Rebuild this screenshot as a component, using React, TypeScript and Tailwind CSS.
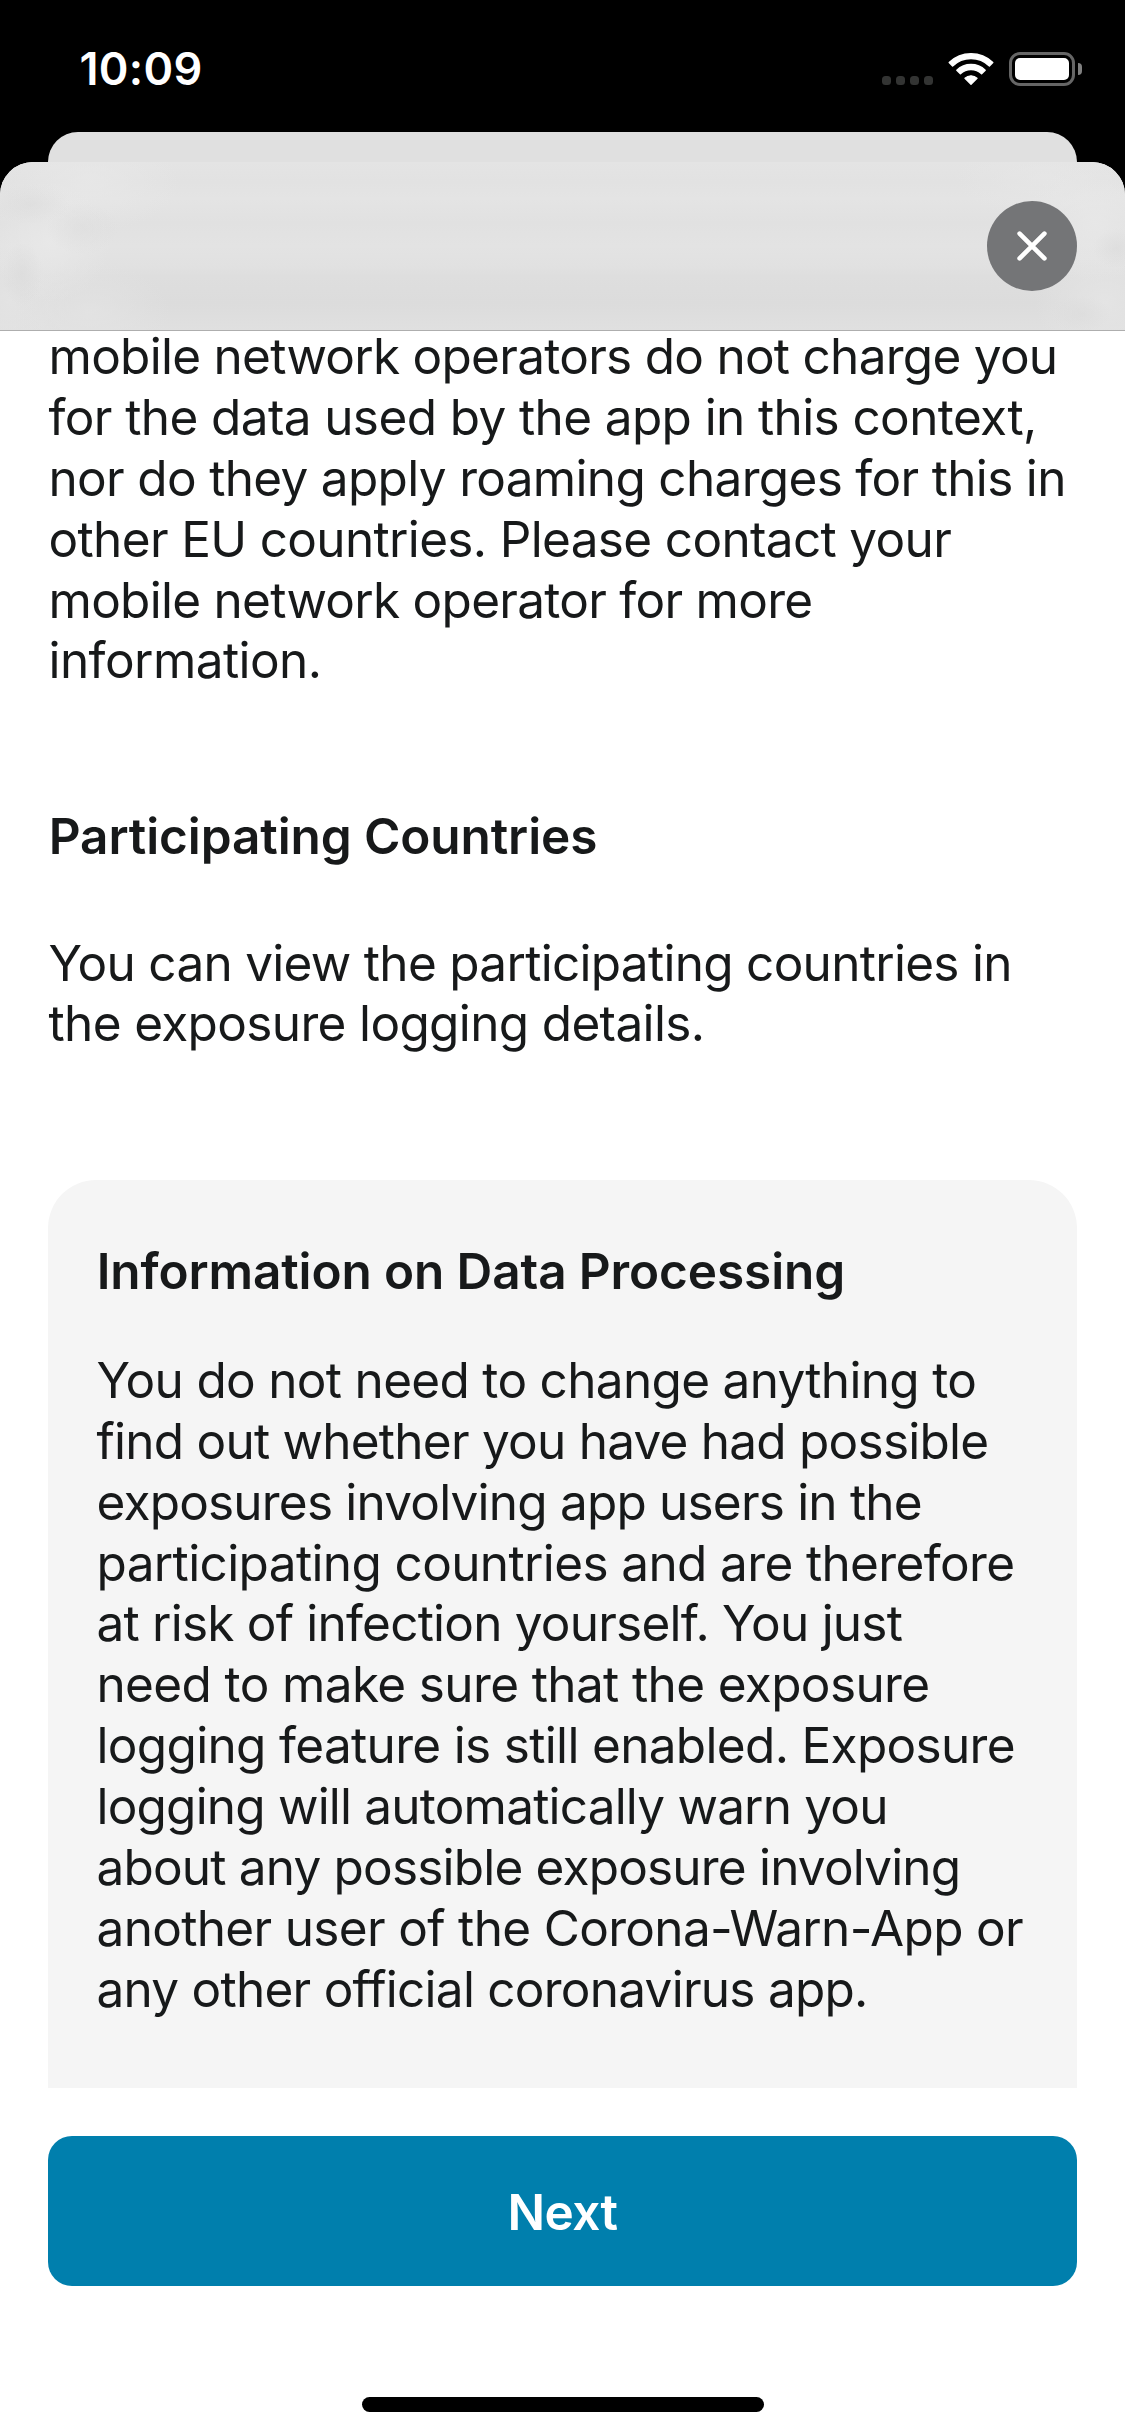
type Line = { text: string; spacing: string };

const chargesText: Line[] = [
  { text: "mobile network operators do not charge you", spacing: "tracking-[-0.725px]" },
  { text: "for the data used by the app in this context,", spacing: "tracking-[-0.608px]" },
  { text: "nor do they apply roaming charges for this in", spacing: "tracking-[-0.68px]" },
  { text: "other EU countries. Please contact your", spacing: "tracking-[-0.655px]" },
  { text: "mobile network operator for more", spacing: "tracking-[-0.72px]" },
  { text: "information.", spacing: "tracking-[-0.56px]" },
];

const countriesText: Line[] = [
  { text: "You can view the participating countries in", spacing: "tracking-[-0.71px]" },
  { text: "the exposure logging details.", spacing: "tracking-[-0.65px]" },
];

const processingText: Line[] = [
  { text: "You do not need to change anything to", spacing: "tracking-[-0.685px]" },
  { text: "find out whether you have had possible", spacing: "tracking-[-0.76px]" },
  { text: "exposures involving app users in the", spacing: "tracking-[-0.803px]" },
  { text: "participating countries and are therefore", spacing: "tracking-[-0.624px]" },
  { text: "at risk of infection yourself. You just", spacing: "tracking-[-0.782px]" },
  { text: "need to make sure that the exposure", spacing: "tracking-[-0.628px]" },
  { text: "logging feature is still enabled. Exposure", spacing: "tracking-[-0.67px]" },
  { text: "logging will automatically warn you", spacing: "tracking-[-0.803px]" },
  { text: "about any possible exposure involving", spacing: "tracking-[-0.815px]" },
  { text: "another user of the Corona-Warn-App or", spacing: "tracking-[-0.67px]" },
  { text: "any other official coronavirus app.", spacing: "tracking-[-0.745px]" },
];

function Paragraph({ lines, className = "" }: { lines: Line[]; className?: string }) {
  return (
    <p className={className}>
      {lines.map((line) => (
        <span key={line.text} className={`block whitespace-nowrap ${line.spacing}`}>
          {line.text}{" "}
        </span>
      ))}
    </p>
  );
}

function WifiIcon() {
  return (
    <svg className="h-[34px] w-[46px]" viewBox="0 0 46 34" fill="#fff" stroke="#fff" strokeWidth="1.4" strokeLinejoin="round">
      <path d="M1.2 10.4A31.6 31.6 0 0 1 44.8 10.4L41.4 13.9A26.4 26.4 0 0 0 4.6 13.9Z" />
      <path d="M8.8 18.2A20.4 20.4 0 0 1 37.2 18.2L33.6 21.8A15.1 15.1 0 0 0 12.4 21.8Z" />
      <path d="M17 26.2A8.9 8.9 0 0 1 29 26.2L23 32.2Z" />
    </svg>
  );
}

function BatteryIcon() {
  return (
    <div className="flex items-center gap-[3px]">
      <div className="h-[34px] w-[66px] rounded-[11px] border-[3px] border-[#666] p-[3px]">
        <div className="h-full w-full rounded-[5px] bg-white" />
      </div>
      <div className="h-3 w-1 rounded-r-full bg-[#808080]" />
    </div>
  );
}

function StatusBar() {
  return (
    <div className="flex h-[132px] shrink-0 items-start justify-between pt-[52px] pr-[43px] pl-[79.5px] text-white">
      <div className="text-[45px] leading-[34px] font-[560] tracking-[0.3px]">10:09</div>
      <div className="flex">
        <div className="mt-6 mr-[15px] flex gap-[5px]">
          {[0, 1, 2, 3].map((dot) => (
            <div key={dot} className="h-[9px] w-[9px] rounded-[3.5px] bg-[#333433]" />
          ))}
        </div>
        <WifiIcon />
        <div className="ml-[15px]">
          <BatteryIcon />
        </div>
      </div>
    </div>
  );
}

export default function App() {
  return (
    <div className="flex h-[2436px] w-[1125px] flex-col overflow-hidden bg-black font-['Inter','Liberation_Sans',sans-serif] text-[49.5px] leading-[60.86px] text-[#17191a]">
      <StatusBar />
      <div className="mx-12 h-[30px] shrink-0 rounded-t-[30px] bg-[#e0e0e0]" />
      <div className="flex min-h-0 flex-1 flex-col overflow-hidden rounded-t-[33px] bg-white">
        <header className="relative z-10 flex h-[169px] shrink-0 items-start justify-end border-b border-[#aeaeae] bg-[linear-gradient(180deg,#e4e4e4_0%,#e2e2e2_12%,#e4e4e4_22%,#e1e1e1_36%,#e3e3e3_50%,#e1e1e1_62%,#dedede_68%,#dcdcdc_84%,#e0e0e0_100%)] pt-[39px] pr-12">
          <div className="absolute inset-y-0 left-0 w-[180px] bg-[radial-gradient(ellipse_40px_20px_at_30px_42px,#d9d9d988,transparent),radial-gradient(ellipse_20px_32px_at_22px_112px,#d8d8d888,transparent),radial-gradient(ellipse_36px_26px_at_82px_66px,#dcdcdc88,transparent),radial-gradient(ellipse_60px_60px_at_50px_80px,#e9e9e9cc,transparent),radial-gradient(ellipse_90px_50px_at_90px_20px,#e9e9e9aa,transparent),radial-gradient(ellipse_80px_50px_at_90px_150px,#e4e4e4bb,transparent),radial-gradient(ellipse_60px_60px_at_10px_140px,#e5e5e5cc,transparent)]" />
          <div className="absolute inset-y-0 right-0 w-[180px] bg-[radial-gradient(ellipse_24px_20px_at_172px_86px,#d8d8d888,transparent),radial-gradient(ellipse_30px_18px_at_136px_152px,#d9d9d977,transparent),radial-gradient(ellipse_70px_60px_at_150px_60px,#e9e9e9bb,transparent),radial-gradient(ellipse_90px_40px_at_100px_16px,#e7e7e7aa,transparent),radial-gradient(ellipse_70px_60px_at_160px_140px,#e6e6e6cc,transparent)]" />
          <button aria-label="Close" className="relative flex h-[90px] w-[90px] items-center justify-center rounded-full bg-[#747577]">
            <svg className="h-[32px] w-[32px]" viewBox="0 0 32 32" fill="none" stroke="#fff" strokeWidth="4.6" strokeLinecap="round">
              <path d="M3.6 3.6 28.4 28.4M28.4 3.6 3.6 28.4" />
            </svg>
          </button>
        </header>
        <main className="h-[1757px] shrink-0 overflow-hidden px-12">
          <Paragraph lines={chargesText} className="-mt-[4.9px] pl-[0.5px]" />
          <h2 className="mt-[114.5px] pl-[0.7px] font-semibold tracking-[-0.1px]">Participating Countries</h2>
          <Paragraph lines={countriesText} className="mt-[66px] pl-[0.5px]" />
          <section className="mt-[125.6px] h-[960px] rounded-t-[48px] bg-[#f5f5f5] px-12 pt-[60.8px]">
            <h2 className="pl-[0.7px] font-semibold tracking-[-0.11px]">Information on Data Processing</h2>
            <Paragraph lines={processingText} className="mt-[48.4px] pl-[0.5px]" />
          </section>
        </main>
        <footer className="flex flex-1 flex-col items-center px-12 pt-12">
          <button className="h-[150px] w-full rounded-3xl bg-[#007fad] pt-0.5 font-semibold tracking-[-0.53px] text-white">Next</button>
          <div className="mt-[111px] h-[15px] w-[402px] rounded-full bg-black" />
        </footer>
      </div>
    </div>
  );
}
